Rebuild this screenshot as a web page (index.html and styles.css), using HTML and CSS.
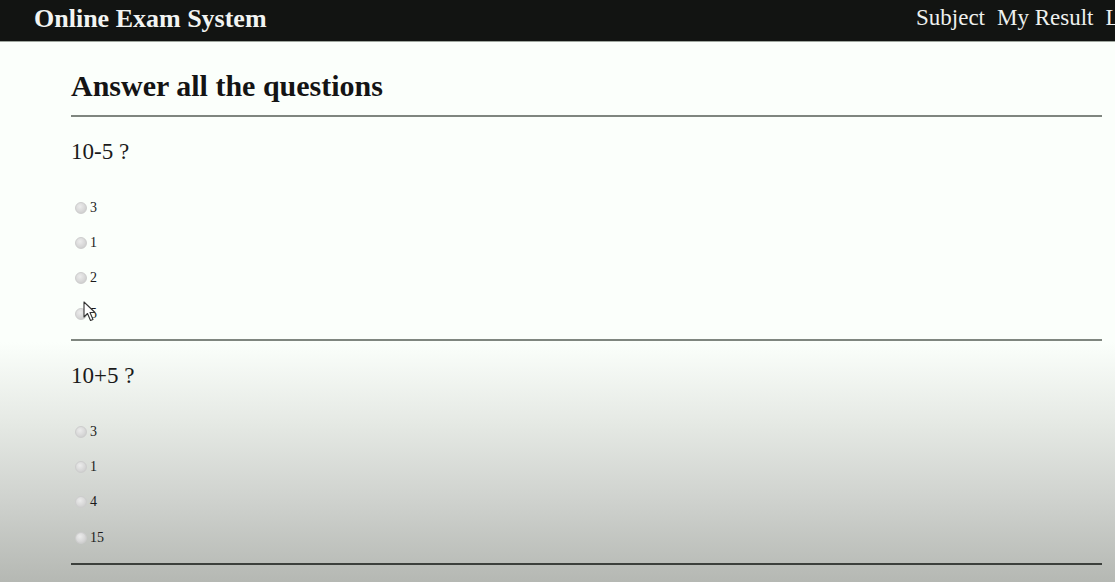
FILE: index.html
```html
<!DOCTYPE html>
<html lang="en">
<head>
<meta charset="utf-8">
<title>Online Exam System</title>
<link rel="stylesheet" href="styles.css">
</head>
<body>
<header class="topbar">
  <div class="brand">Online Exam System</div>
  <nav class="nav">
    <a href="#">Subject</a>
    <a href="#">My Result</a>
    <a href="#">Logout</a>
  </nav>
</header>
<main class="content">
  <h1 class="title">Answer all the questions</h1>
  <hr class="rule">
  <section class="question">
    <p class="q-text">10-5 ?</p>
    <ul class="options">
      <li><label><input type="radio" name="q1"><span>3</span></label></li>
      <li><label><input type="radio" name="q1"><span>1</span></label></li>
      <li><label><input type="radio" name="q1"><span>2</span></label></li>
      <li class="has-cursor"><label><input type="radio" name="q1"><span>5</span></label>
        <svg class="cursor" width="14" height="21" viewBox="0 0 14 21"><path d="M1 1 L1 16 L4.5 12.5 L7.5 19.5 L10 18.5 L7 11.5 L12 11.5 Z" fill="#fff" stroke="#333" stroke-width="1.1" stroke-linejoin="round"/></svg>
      </li>
    </ul>
  </section>
  <hr class="rule">
  <section class="question">
    <p class="q-text">10+5 ?</p>
    <ul class="options">
      <li><label><input type="radio" name="q2"><span>3</span></label></li>
      <li><label><input type="radio" name="q2"><span>1</span></label></li>
      <li><label><input type="radio" name="q2"><span>4</span></label></li>
      <li><label><input type="radio" name="q2"><span>15</span></label></li>
    </ul>
  </section>
  <hr class="rule dark">
</main>
</body>
</html>
```
FILE: styles.css
```css
html, body {
  margin: 0;
  padding: 0;
}
html {
  min-height: 100%;
  background: linear-gradient(to bottom, #fbfffb 0, #fbfffb 342px, #e6eae5 420px, #cfd2ce 500px, #b5b8b3 582px);
  background-repeat: no-repeat;
  background-size: 100% 582px;
  background-color: #b5b8b3;
}
body {
  font-family: "Liberation Serif", "Times New Roman", serif;
  color: #111;
  overflow: hidden;
  height: 582px;
}
.topbar {
  height: 41px;
  background: #121412;
  border-bottom: 1px solid #9ea69e;
  display: flex;
  align-items: center;
  padding-left: 34px;
  overflow: hidden;
}
.brand {
  flex: 0 0 882px;
  color: #f2f4f2;
  font-weight: bold;
  font-size: 26px;
  line-height: 1;
  margin-top: -3px;
  white-space: nowrap;
}
.nav {
  flex: 0 0 auto;
  display: flex;
  gap: 12px;
  margin-top: -7px;
  white-space: nowrap;
}
.nav a {
  color: #eef0ee;
  text-decoration: none;
  font-size: 23px;
  line-height: 1;
}
.content {
  padding: 0 13px 0 71px;
}
.title {
  margin: 28px 0 0;
  font-size: 30px;
  line-height: 32px;
  font-weight: bold;
  color: #141414;
}
.rule {
  margin: 13px 0 0;
  border: 0;
  height: 2px;
  background: #7f867f;
}
.question {
  padding-top: 23px;
}
.q-text {
  margin: 0;
  font-size: 23px;
  line-height: 24px;
  color: #1a1a1a;
}
.options {
  list-style: none;
  margin: 26px 0 0;
  padding: 0;
}
.options li {
  height: 35.3px;
  display: flex;
  align-items: center;
  position: relative;
}
.options label {
  display: flex;
  align-items: center;
  gap: 3px;
  font-size: 14px;
  color: #1a1a1a;
  padding-left: 4px;
}
.options input {
  appearance: none;
  -webkit-appearance: none;
  margin: 0;
  width: 12px;
  height: 12px;
  border-radius: 50%;
  background: radial-gradient(circle at 40% 35%, #ececec 0, #d6d6d6 60%, #c6c6c6 100%);
  border: 1px solid #cdcdcd;
  box-sizing: border-box;
}
.question + .rule {
  margin-top: 8px;
}
.rule.dark {
  background: #3c403c;
  margin-top: 8px;
}
.cursor {
  position: absolute;
  left: 12px;
  top: 5px;
}
```
